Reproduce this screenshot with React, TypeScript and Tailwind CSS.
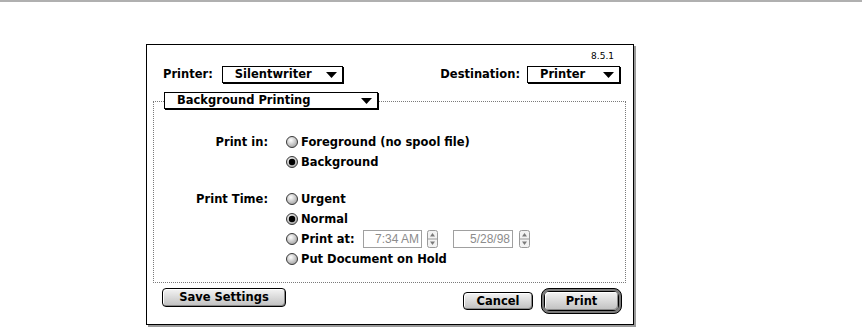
import React from 'react';

const chicago = "font-['DejaVu_Sans',Verdana,sans-serif] font-bold text-[11.5px] text-black";

function Triangle() {
    return (
        <svg width="11" height="6" viewBox="0 0 11 6" className="shrink-0">
            <path d="M0 0 H11 L5.5 6 Z" fill="#000" />
        </svg>
    );
}

function Popup({ label, className }: { label: string; className: string }) {
    return (
        <div
            className={`flex h-[17px] items-center justify-between border border-black bg-white pl-[12px] pr-[5px] leading-none shadow-[1px_1px_0_#000] ${className}`}
        >
            <span>{label}</span>
            <Triangle />
        </div>
    );
}

function Radio({ checked }: { checked?: boolean }) {
    return (
        <svg width="12" height="12" viewBox="0 0 12 12" className="shrink-0">
            <defs>
                <radialGradient id="rg" cx="0.4" cy="0.35" r="0.7">
                    <stop offset="0" stopColor="#ffffff" />
                    <stop offset="1" stopColor="#a0a0a0" />
                </radialGradient>
            </defs>
            <circle cx="6" cy="6" r="5.5" fill="url(#rg)" stroke="#3a3a3a" strokeWidth="1" />
            {checked && <circle cx="6" cy="6" r="3.2" fill="#000" />}
        </svg>
    );
}

function Stepper() {
    return (
        <svg width="11" height="18" viewBox="0 0 11 18" className="shrink-0">
            <rect x="0.5" y="0.5" width="10" height="17" rx="2" fill="#f2f2f2" stroke="#9a9a9a" />
            <line x1="1" y1="9" x2="10" y2="9" stroke="#9a9a9a" />
            <path d="M5.5 3 L8 6.5 H3 Z" fill="#7a7a7a" />
            <path d="M5.5 15 L8 11.5 H3 Z" fill="#7a7a7a" />
        </svg>
    );
}

function Field({ value, width }: { value: string; width: string }) {
    return (
        <div
            className={`flex h-[18px] items-center justify-end border border-[#a0a0a0] bg-white pr-[2px] font-['Liberation_Sans',Arial,sans-serif] text-[12px] font-normal text-[#8c8c8c] ${width}`}
        >
            {value}
        </div>
    );
}

function Row({ label, checked, children }: { label?: string; checked?: boolean; children: React.ReactNode }) {
    return (
        <div className="flex h-[20px] items-center">
            <div className="w-[114px] text-right">{label}</div>
            <div className="ml-[18px] flex items-center">
                <Radio checked={checked} />
                <div className="ml-[3px] flex items-center">{children}</div>
            </div>
        </div>
    );
}

function MacButton({ label, className }: { label: string; className: string }) {
    return (
        <div
            className={`flex items-center justify-center rounded-[4px] border border-black bg-gradient-to-b from-[#f4f4f4] to-[#c0c0c0] leading-none shadow-[inset_1px_1px_0_#fff,inset_-1px_-1px_0_#8a8a8a] ${className}`}
        >
            {label}
        </div>
    );
}

export default function App() {
    return (
        <div className={`h-[328px] w-[862px] overflow-hidden bg-white ${chicago}`}>
            <div className="h-[2px] bg-[#b0b0b0]" />

            <div className="ml-[146px] mt-[42px] flex h-[281px] w-[488px] flex-col border border-black shadow-[2px_2px_0_#9a9a9a]">
                <div className="pr-[19px] pt-[6px] text-right text-[9px] font-normal leading-[10px]">8.5.1</div>

                <div className="mt-[5px] flex items-center justify-between pl-[16px] pr-[13px]">
                    <div className="flex items-center">
                        <span>Printer:</span>
                        <Popup label="Silentwriter" className="ml-[9px] w-[121px]" />
                    </div>
                    <div className="flex items-center">
                        <span>Destination:</span>
                        <Popup label="Printer" className="ml-[7px] w-[93px]" />
                    </div>
                </div>

                <div className="ml-[6px] mr-[7px] mt-[18px] h-[182px] border border-dotted border-[#7a7a7a]">
                    <Popup label="Background Printing" className="-mt-[10px] ml-[10px] w-[214px]" />

                    <div className="mt-[23px]">
                        <Row label="Print in:">Foreground (no spool file)</Row>
                        <Row checked>Background</Row>
                    </div>

                    <div className="mt-[17px]">
                        <Row label="Print Time:">Urgent</Row>
                        <Row checked>Normal</Row>
                        <Row>
                            <span className="w-[62px]">Print at:</span>
                            <Field value="7:34 AM" width="w-[59px]" />
                            <span className="ml-[5px]">
                                <Stepper />
                            </span>
                            <span className="ml-[15px]">
                                <Field value="5/28/98" width="w-[60px]" />
                            </span>
                            <span className="ml-[6px]">
                                <Stepper />
                            </span>
                        </Row>
                        <Row>Put Document on Hold</Row>
                    </div>
                </div>

                <div className="flex pl-[15px] pr-[11px]">
                    <MacButton label="Save Settings" className="mt-[5px] h-[19px] w-[124px]" />
                    <div className="ml-auto mt-[5px] flex items-center">
                        <MacButton label="Cancel" className="h-[18px] w-[70px]" />
                        <div className="ml-[8px] rounded-[8px] border border-black bg-[#7a7a7a] p-[2px]">
                            <div className="rounded-[6px] border border-black">
                                <MacButton label="Print" className="h-[18px] w-[73px] border-0" />
                            </div>
                        </div>
                    </div>
                </div>
            </div>
        </div>
    );
}
